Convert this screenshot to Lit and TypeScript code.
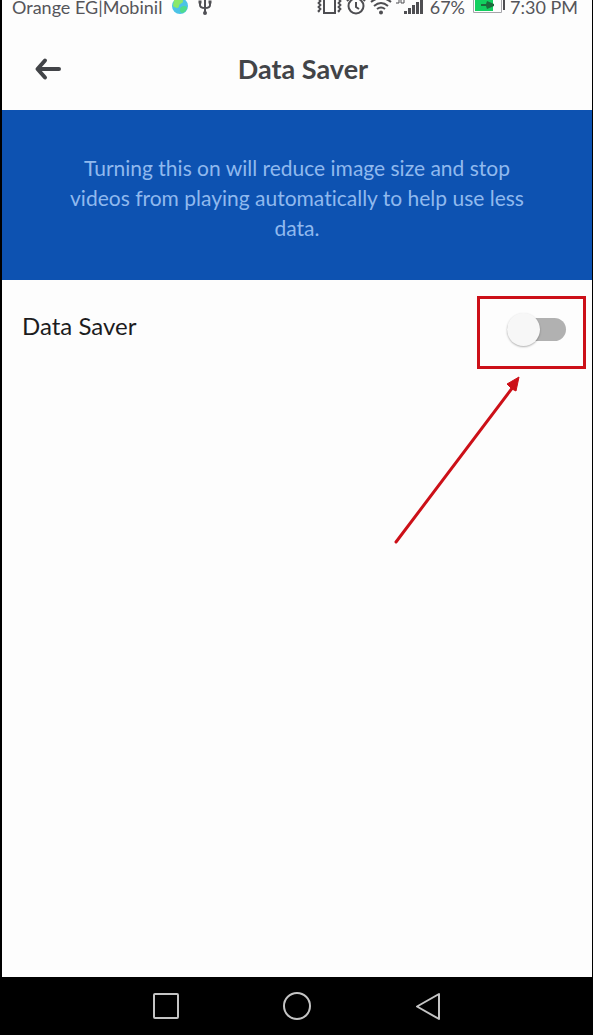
import { LitElement, html, css, svg } from "lit";
import { customElement, state } from "lit/decorators.js";

@customElement("status-bar")
class StatusBar extends LitElement {
  static styles = css`
    :host {
      display: flex;
      align-items: flex-end;
      justify-content: space-between;
      height: 20px;
      padding: 0 14px 0 10px;
      font-size: 18px;
      line-height: 26px;
      color: #55555a;
      white-space: nowrap;
    }
    .group {
      display: flex;
      align-items: flex-end;
      gap: 9px;
    }
    .tight {
      gap: 4px;
    }
    svg {
      display: block;
      height: 26px;
    }
  `;

  render() {
    return html`
      <div class="group">
        <span>Orange EG|Mobinil</span>
        <svg width="18" height="26" viewBox="0 0 18 26" aria-hidden="true">
          <circle cx="9" cy="12" r="8" fill="#4cc3e6" />
          <path d="M3 6C6 3 12 4 12 7S8 9 8 12s-4 2-6 0z" fill="#8be86a" />
          <path d="M10 13c3-2 6-1 6 1s-3 5-5 5-3-4-1-6z" fill="#4fdc8c" />
        </svg>
        <svg width="14" height="26" viewBox="0 0 14 26" fill="none" stroke="#505055" stroke-width="2" aria-hidden="true">
          <path d="M7 2v16M2 8v3q0 3 5 3t5-3V8" />
          <circle cx="7" cy="19" r="1" />
          <path d="M0.500 8h3M10.500 8h3" stroke-width="3" />
        </svg>
      </div>
      <div class="group tight">
        <svg width="25" height="26" viewBox="0 0 25 26" fill="none" stroke="#4e4e52" stroke-width="2" aria-hidden="true">
          <path d="M7 2h11v17H7z" />
          <path d="M1.500 5l2 2-2 2 2 2-2 2 2 2-2 2 1 1M21.500 5l2 2-2 2 2 2-2 2 2 2-2 2 1 1" stroke-width="1.800" />
        </svg>
        <svg width="20" height="26" viewBox="0 0 20 26" fill="none" stroke="#4e4e52" stroke-width="2" aria-hidden="true">
          <circle cx="10" cy="12" r="7.500" />
          <path d="M10 8v5l3 2M1 7l4-4M19 7l-4-4" />
        </svg>
        <svg width="22" height="26" viewBox="0 0 22 26" fill="none" stroke="#4e4e52" stroke-width="2" aria-hidden="true">
          <path d="M1 8q10-8 20 0M4 12q7-6 14 0M7 15q4-3 8 0" />
          <circle cx="11" cy="18.500" r="1" />
        </svg>
        <svg width="30" height="26" viewBox="0 0 30 26" fill="#4e4e52" aria-hidden="true">
          <path d="M0 5h3v4H0M5 5v4h3V5z" fill="none" stroke="#4e4e52" />
          <path d="M8 17h3v3H8zM12 14h3v6h-3zM16 11h3v9h-3zM20 8h3v12h-3zM24 4h3v16h-3z" />
        </svg>
        <span>67%</span>
        <svg width="37" height="26" viewBox="-3 0 37 26" aria-hidden="true">
          <path d="M1.500 2h28v16.500h-28z" fill="#fdfdfd" stroke="#a5a5aa" />
          <path d="M3 2h18v15H3z" fill="#12cf5f" />
          <path d="M9 10h5l1-3 7 3v2l-7 3-1-3H9z" fill="#1c6b3c" />
          <path d="M31 6h2v10h-2z" fill="#4e4e52" />
        </svg>
        <span>7:30 PM</span>
      </div>
    `;
  }
}

@customElement("pointer-arrow")
class PointerArrow extends LitElement {
  static styles = css`
    :host,
    svg {
      display: block;
    }
  `;

  render() {
    return html`
      <svg width="128" height="170" viewBox="0 0 128 170" aria-hidden="true">
        <path d="M3 167L120 12" stroke="#cc1018" stroke-width="3" stroke-linecap="round" />
        <path d="M126 2L123 16L119 14L114 9Z" fill="#cc1018" stroke="#cc1018" />
      </svg>
    `;
  }
}

@customElement("app-root")
class AppRoot extends LitElement {
  static styles = css`
    :host {
      display: flex;
      flex-direction: column;
      box-sizing: border-box;
      min-height: 100vh;
      border-left: 2px solid #000;
      border-right: 1px solid #000;
      background: #fdfdfd;
      font-family: Lato, "Noto Sans", sans-serif;
      font-variant-ligatures: none;
    }
    button {
      display: grid;
      place-items: center;
      padding: 0;
      border: 0;
      background: none;
    }
    svg {
      display: block;
    }
    .header {
      display: grid;
      grid-template-columns: 48px 1fr 36px;
      align-items: center;
      box-sizing: border-box;
      height: 90px;
      padding: 8px 22px 0;
    }
    .back {
      height: 48px;
    }
    h1 {
      margin: 0;
      text-align: center;
      font-size: 27px;
      line-height: 32px;
      font-weight: 700;
      color: #424448;
    }
    .banner {
      padding: 43px 60px 37px;
      background: #0d52b1;
      text-align: center;
      font-size: 21px;
      line-height: 30px;
      color: #90b9ee;
    }
    .banner p {
      margin: 0;
    }
    .row {
      display: flex;
      align-items: center;
      justify-content: space-between;
      padding: 16px 6px 16px 20px;
    }
    .row label {
      font-size: 24px;
      line-height: 30px;
      padding-bottom: 14px;
      color: #1c1c1e;
    }
    .highlight {
      position: relative;
      display: grid;
      place-items: center;
      box-sizing: border-box;
      width: 109px;
      height: 73px;
      padding: 0 0 6px 10px;
      border: 3px solid #cc1018;
    }
    .switch {
      appearance: none;
      display: flex;
      align-items: center;
      width: 59px;
      height: 23px;
      margin: 0;
      background: #b1b1b1;
      border-radius: 12px;
    }
    .switch::before {
      content: "";
      width: 33px;
      height: 33px;
      border-radius: 50%;
      background: #f7f7f7;
      box-shadow: 0 1px 2px #0000004d;
    }
    .switch:checked {
      justify-content: flex-end;
    }
    .arrow {
      position: absolute;
      top: 76px;
      right: 62px;
    }
    .nav {
      display: flex;
      justify-content: center;
      gap: 83px;
      height: 58px;
      margin-top: auto;
      background: #000;
    }
    .nav button {
      width: 48px;
      height: 58px;
    }
  `;

  @state() private enabled = false;

  private toggle(event: Event) {
    this.enabled = (event.target as HTMLInputElement).checked;
  }

  private navButton(label: string, shape: unknown) {
    return html`
      <button aria-label=${label}>
        <svg width="30" height="30" viewBox="0 0 30 30" fill="none" stroke="#c4c4c4" stroke-width="2" stroke-linejoin="round">
          ${shape}
        </svg>
      </button>
    `;
  }

  render() {
    return html`
      <status-bar></status-bar>
      <header class="header">
        <button class="back" aria-label="Back">
          <svg width="28" height="24" viewBox="0 0 28 24" fill="none" stroke="#424448" stroke-width="4" stroke-linecap="round" stroke-linejoin="round">
            <path d="M11 3.500L3.500 12l7.500 8.500M4 12h21" />
          </svg>
        </button>
        <h1>Data Saver</h1>
      </header>
      <section class="banner">
        <p>Turning this on will reduce image size and stop videos from playing automatically to help use less data.</p>
      </section>
      <div class="row">
        <label for="saver">Data Saver</label>
        <div class="highlight">
          <input class="switch" id="saver" type="checkbox" role="switch" .checked=${this.enabled} @change=${this.toggle} />
          <pointer-arrow class="arrow"></pointer-arrow>
        </div>
      </div>
      <nav class="nav">
        ${this.navButton("Recent apps", svg`<rect x="3" y="3" width="24" height="24" rx="1" />`)}
        ${this.navButton("Home", svg`<circle cx="15" cy="15" r="13" />`)}
        ${this.navButton("Back", svg`<path d="M26 3v25L4 15.500z" />`)}
      </nav>
    `;
  }
}
